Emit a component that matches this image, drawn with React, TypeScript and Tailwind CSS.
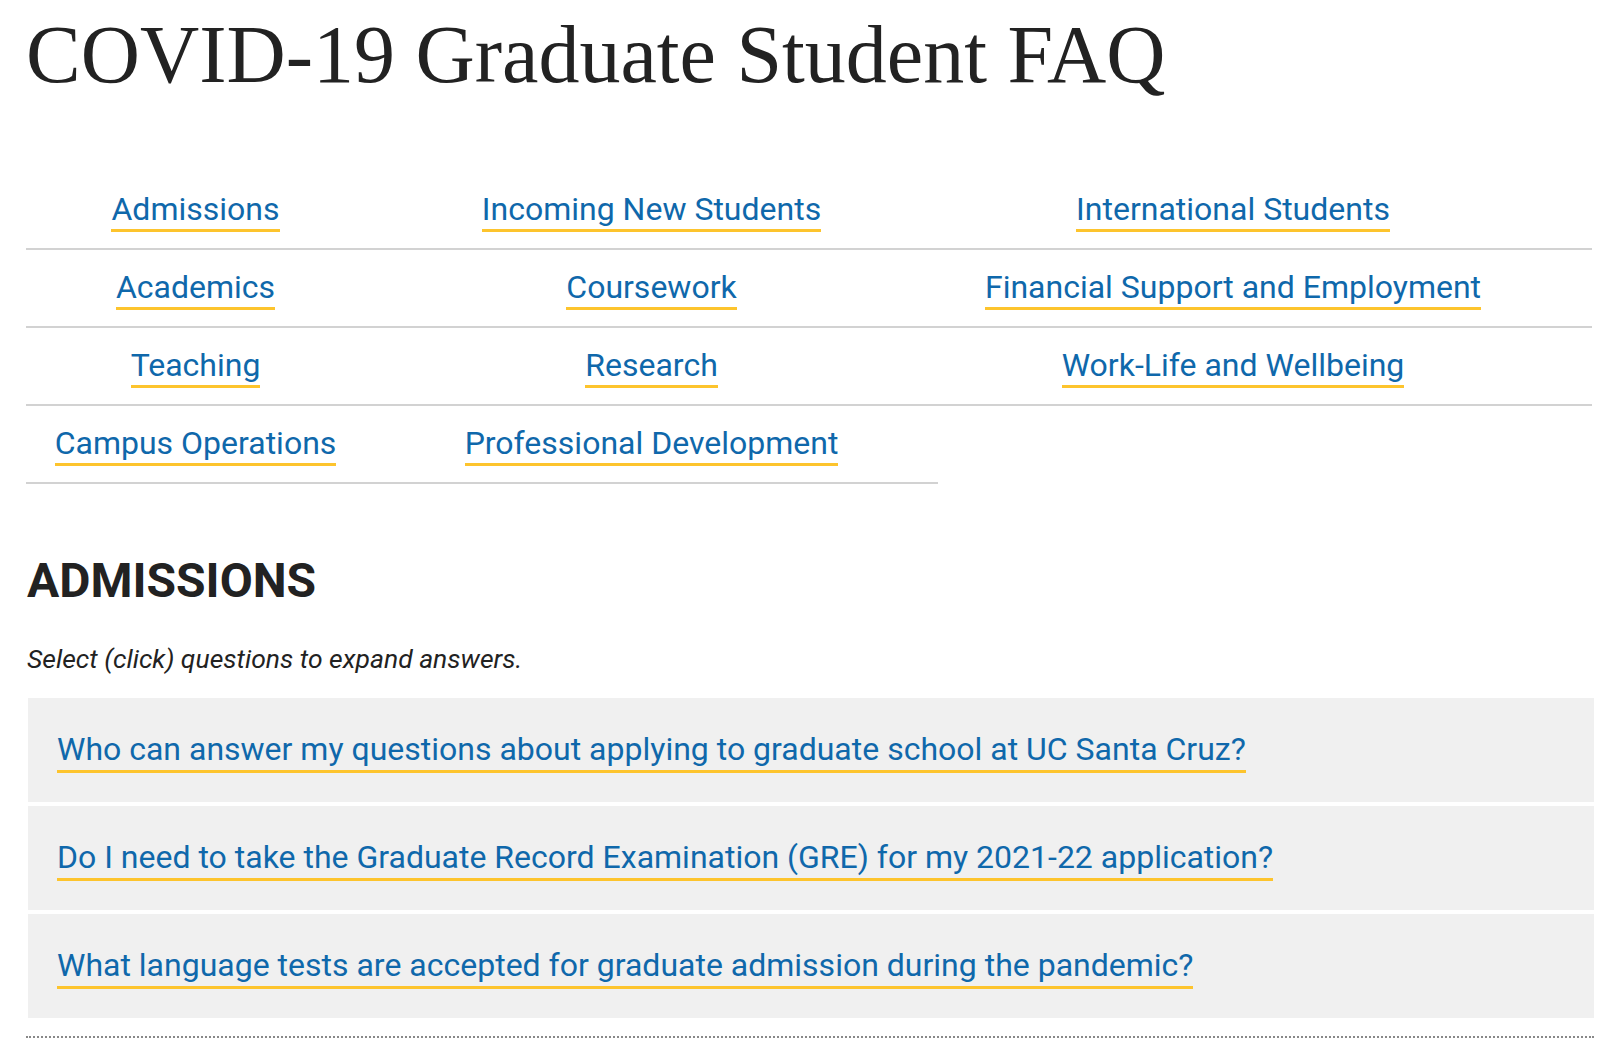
import React from 'react';

const topics: string[][] = [
  ['Admissions', 'Incoming New Students', 'International Students'],
  ['Academics', 'Coursework', 'Financial Support and Employment'],
  ['Teaching', 'Research', 'Work-Life and Wellbeing'],
  ['Campus Operations', 'Professional Development'],
];

const questions = [
  'Who can answer my questions about applying to graduate school at UC Santa Cruz?',
  'Do I need to take the Graduate Record Examination (GRE) for my 2021-22 application?',
  'What language tests are accepted for graduate admission during the pandemic?',
];

const TopicLink: React.FC<{ label: string }> = ({ label }) => (
  <a
    href="#"
    className="border-b-[3px] border-[#fdc42d] pb-[1px] text-[#0f68ab] no-underline"
  >
    {label}
  </a>
);

export default function App() {
  return (
    <div className="min-h-screen bg-white pl-[26px] pr-[20px] pt-[14px] font-['Roboto',sans-serif] text-[#222]">
      <h1 className="font-['Liberation_Serif',serif] text-[82px] leading-none font-normal text-[#222]">
        COVID-19 Graduate Student FAQ
      </h1>

      <nav className="mt-[76px] mr-[2px] grid grid-cols-[339px_573px_1fr] text-[32px] leading-[48px]">
        {topics.map((row, r) =>
          [0, 1, 2].map((c) => {
            const label = row[c];
            if (!label) return <div key={`${r}-${c}`} />;
            return (
              <div
                key={`${r}-${c}`}
                className={
                  c === 2
                    ? 'border-b-2 border-[#d2d2d2] pt-[13px] pb-[15px] pr-[64px] text-center'
                    : 'border-b-2 border-[#d2d2d2] pt-[13px] pb-[15px] text-center'
                }
              >
                <TopicLink label={label} />
              </div>
            );
          })
        )}
      </nav>

      <h2 className="mt-[73px] pl-[1px] text-[48px] leading-none font-bold">ADMISSIONS</h2>

      <p className="mt-[41px] pl-[1px] text-[26.5px] leading-[26px] italic text-[#222]">
        Select (click) questions to expand answers.
      </p>

      <div className="mt-[26px] ml-[2px] flex flex-col gap-1">
        {questions.map((q) => (
          <div key={q} className="h-[104px] bg-[#f0f0f0] pl-[29px] pt-[27px] text-[32px] leading-[48px]">
            <a
              href="#"
              className="border-b-[3px] border-[#fdc42d] pb-[2px] text-[#0f68ab] no-underline"
            >
              {q}
            </a>
          </div>
        ))}
      </div>

      <div className="mt-[18px] border-t-2 border-dotted border-[#888]" />
    </div>
  );
}
